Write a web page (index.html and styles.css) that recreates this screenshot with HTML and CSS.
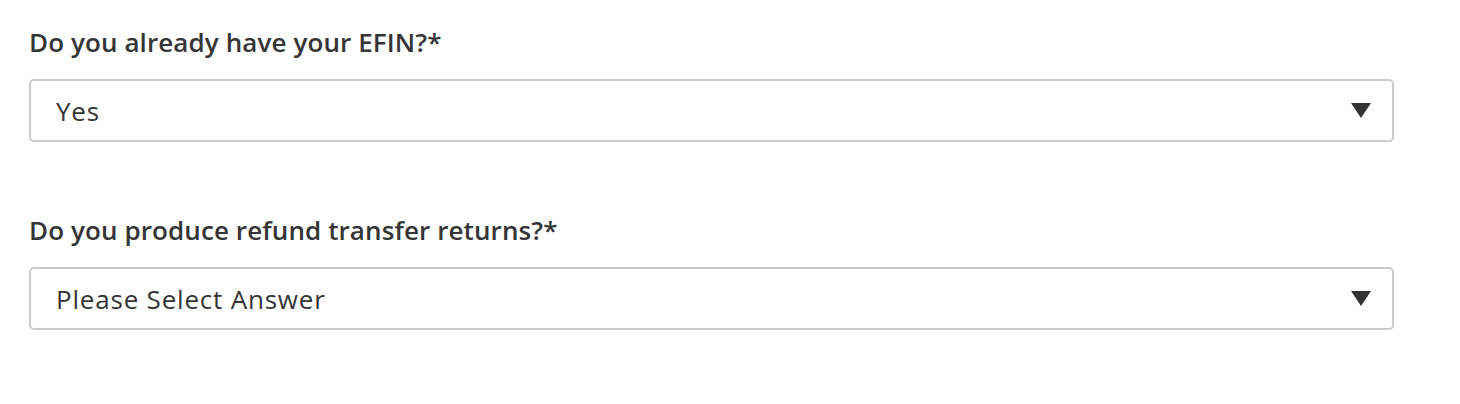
FILE: index.html
```html
<!DOCTYPE html>
<html lang="en">
<head>
<meta charset="utf-8">
<title>EFIN form</title>
<link rel="stylesheet" href="styles.css">
</head>
<body>
<form class="form">
  <div class="field">
    <label class="label">Do you already have your EFIN?*</label>
    <div class="select">
      <span class="value">Yes</span>
      <svg class="caret" width="20" height="15" viewBox="0 0 20 15"><path d="M0 0H20L10 15Z" fill="#333"/></svg>
    </div>
  </div>
  <div class="field">
    <label class="label">Do you produce refund transfer returns?*</label>
    <div class="select">
      <span class="value">Please Select Answer</span>
      <svg class="caret" width="20" height="15" viewBox="0 0 20 15"><path d="M0 0H20L10 15Z" fill="#333"/></svg>
    </div>
  </div>
</form>
</body>
</html>
```
FILE: styles.css
```css
html, body {
  margin: 0;
  padding: 0;
  background: #fff;
}
body {
  font-family: "Open Sans", "Noto Sans", sans-serif;
  color: #353535;
}
.form {
  padding: 27px 0 0 29px;
  width: 1365px;
  display: flex;
  flex-direction: column;
  gap: 73px;
}
.field {
  display: flex;
  flex-direction: column;
  gap: 22px;
}
.label {
  font-size: 26px;
  font-weight: 600;
  line-height: 30px;
  letter-spacing: 0.1px;
}
.select {
  box-sizing: border-box;
  height: 63px;
  border: 2px solid #c9cbce;
  border-radius: 5px;
  display: flex;
  align-items: center;
  justify-content: space-between;
  padding: 0 21px 0 25px;
}
.value {
  font-size: 26px;
  font-weight: 400;
  letter-spacing: 0.8px;
}
.caret {
  display: block;
}
```
